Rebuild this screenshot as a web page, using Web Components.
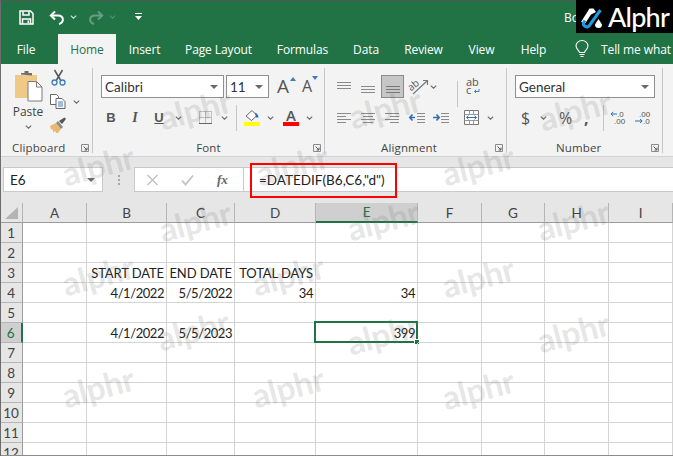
<!DOCTYPE html>
<html>
<head>
<meta charset="utf-8">
<title>Book1 - Excel</title>
<style>
  html, body { margin: 0; padding: 0; overflow: hidden; }
  body { width: 673px; height: 456px; font-family: "Open Sans", sans-serif; }
  excel-window { width: 673px; height: 456px; }
</style>
</head>
<body>
<excel-window>
  <excel-titlebar title-text="Book1 - Excel"></excel-titlebar>
  <excel-tabs></excel-tabs>
  <excel-ribbon></excel-ribbon>
  <excel-formula-bar cell="E6" formula='=DATEDIF(B6,C6,"d")'></excel-formula-bar>
  <excel-sheet></excel-sheet>
</excel-window>

<script>
// small helper, all icons are drawn on a pixel viewBox of their own size
const svg = (w, h, body, extra = '') =>
  `<svg width="${w}" height="${h}" viewBox="0 0 ${w} ${h}" fill="none" style="display:block;flex:none;overflow:visible;${extra}">${body}</svg>`;

const chevron = (c = '#6a6a6a') => svg(7, 4, `<path d="M.8.6 3.5 3.2 6.2.6" stroke="${c}" stroke-width="1.1"/>`);
const dropTri = svg(8, 4, '<path d="M0 0h8L4 4z" fill="#6a6a6a"/>');
const launcher = svg(8, 8, '<path d="M.5 7.500V.5h7v7z" stroke="#8a8a8a"/><path d="M2.500 2.500 6 6M6 3.500V6H3.500" stroke="#5a5a5a"/>');
const lines = (rows, c = '#8a8a8a') => rows.map(([x, y, w]) => `<path d="M${x} ${y + .5}h${w}" stroke="${c}"/>`).join('');

class ExcelWindow extends HTMLElement {
  constructor() {
    super();
    this.attachShadow({ mode: 'open' });
    const marks = [
      [195, 109], [385, 108], [575, 110],
      [98, 165], [292, 165], [478, 165],
      [195, 221], [383, 220], [573, 220],
      [98, 275], [288, 275], [478, 277],
      [193, 330], [383, 334], [573, 332],
      [98, 387], [288, 387], [478, 389]
    ];
    this.shadowRoot.innerHTML = `
      <style>
        :host { display: flex; flex-direction: column; position: relative; overflow: hidden; background: #fff; }
        .edge { position: absolute; inset: 0; border-top: 1px solid #4d5a53; border-left: 1px solid #6d6d6d; pointer-events: none; }
        .mark {
          position: absolute; transform: translate(-50%, -50%) rotate(-15deg);
          font: 700 33px "Lato", sans-serif; letter-spacing: -.3px; line-height: 1;
          color: rgba(105, 105, 105, .18); pointer-events: none;
        }
        .callout { position: absolute; left: 250px; top: 163px; width: 147px; height: 35px; box-sizing: border-box; border: 2px solid #f00; pointer-events: none; }
        .logo {
          position: absolute; right: 0; top: 0; width: 97px; height: 33px; background: #000;
          display: flex; align-items: center; gap: 4px; padding-left: 4px; box-sizing: border-box;
          color: #fff; font: 500 27px "Lato", sans-serif; letter-spacing: -.8px; overflow: hidden;
        }
      </style>
      <slot></slot>
      <div class="edge"></div>
      ${marks.map(([x, y]) => `<span class="mark" style="left:${x}px;top:${y}px">alphr</span>`).join('')}
      <div class="callout"></div>
      <div class="logo">
        ${svg(24, 24, `
          <path d="M1 17 9.500 3.500h4L16 7 11 9.500 5.500 18z" fill="#fff"/>
          <path d="M15.500 15 19 20.500a3.400 3.400 0 1 1-7 0z" fill="#fff" transform="translate(3 -1)"/>
          <path d="M20.500 5 9 21c-1.600 2-6.500 0-5.500-3L5 15.500" stroke="#1b9ce0" stroke-width="3"/>
        `)}
        <span>Alphr</span>
      </div>`;
  }
}

class ExcelTitlebar extends HTMLElement {
  connectedCallback() {
    const root = this.attachShadow({ mode: 'open' });
    root.innerHTML = `
      <style>
        :host { display: flex; align-items: center; height: 34px; background: #217346; color: #fff; font: 12px "Open Sans", sans-serif; flex: none; }
        .save { margin-left: 19px; }
        .undo { margin-left: 15px; }
        .c1 { margin-left: 5px; }
        .redo { margin-left: 11px; }
        .c2 { margin-left: 5px; }
        .more { margin-left: 18px; }
        .title { margin-left: 421px; white-space: nowrap; }
      </style>
      <span class="save">${svg(15, 15, '<path d="M1 1h10.500L14 3.500V14H1z" stroke="#fff" stroke-width="1.500"/><path d="M4 1.500v3.500h6V1.500M3.500 14V9h8v5" stroke="#fff" stroke-width="1.500"/><path d="M8.500 10.500h1.500V13H8.500z" fill="#fff"/>')}</span>
      <span class="undo">${svg(16, 15, '<path d="M6 1.500 1.800 5.500 6 9.500" stroke="#fff" stroke-width="2"/><path d="M2.500 5.500H9c6 0 6.500 7 1 8.500" stroke="#fff" stroke-width="2"/>')}</span>
      <span class="c1">${chevron('#cfe3d8')}</span>
      <span class="redo">${svg(16, 15, '<path d="M10 1.500l4.200 4L10 9.500" stroke="#64a083" stroke-width="2"/><path d="M13.500 5.500H7c-6 0-6.500 7-1 8.500" stroke="#64a083" stroke-width="2"/>')}</span>
      <span class="c2">${chevron('#4f9273')}</span>
      <span class="more">${svg(9, 8, '<path d="M1 .5h7" stroke="#fff"/><path d="M1 3h7L4.500 7z" fill="#fff"/>')}</span>
      <span class="title">${this.getAttribute('title-text')}</span>`;
  }
}

class ExcelTabs extends HTMLElement {
  constructor() {
    super();
    const tabs = [['File', 52, 6], ['Home', 58], ['Insert', 57], ['Page Layout', 91], ['Formulas', 77], ['Data', 50], ['Review', 65], ['View', 51], ['Help', 53]];
    this.attachShadow({ mode: 'open' }).innerHTML = `
      <style>
        :host { display: flex; height: 30px; background: #217346; color: #fff; font: 12px "Open Sans", sans-serif; flex: none; white-space: nowrap; overflow: hidden; }
        .tab { display: flex; align-items: center; justify-content: center; height: 30px; letter-spacing: -.1px; flex: none; }
        .active { background: #f3f3f3; color: #217346; }
        .bulb { margin-left: 15px; align-self: center; }
        .tell { margin-left: 12px; }
      </style>
      ${tabs.map(([name, w, m]) => `<div class="tab ${name === 'Home' ? 'active' : ''}" style="width:${w}px;margin-right:${m || 0}px">${name}</div>`).join('')}
      <span class="bulb">${svg(14, 19, '<path d="M4.500 12.500C4 10 1 9 1 5.800a6 5.300 0 0 1 12 0c0 3.200-3 4.200-3.500 6.700z" stroke="#fff" stroke-width="1.100"/><path d="M4.500 14.500h5M5.500 16.500h3" stroke="#fff" stroke-width="1.200"/>')}</span>
      <div class="tab tell">Tell me what you want to do</div>`;
  }
}

class RibbonGroup extends HTMLElement {
  constructor() {
    super();
    this.attachShadow({ mode: 'open' }).innerHTML = `
      <style>
        :host { display: block; position: relative; box-sizing: border-box; height: 85px; margin-top: 4px; flex: none; border-right: 1px solid #c6c6c6; }
        .body { height: 72px; }
        .label { display: block; text-align: center; font: 11.500px "Open Sans", sans-serif; letter-spacing: .15px; color: #444; }
        .launch { position: absolute; right: 3px; bottom: 1px; }
      </style>
      <div class="body"><slot></slot></div>
      <span class="label"></span>
      <span class="launch">${launcher}</span>`;
  }
  connectedCallback() {
    const label = this.shadowRoot.querySelector('.label');
    label.textContent = this.getAttribute('label');
    label.style.cssText += this.getAttribute('label-style') || '';
  }
}

class RibbonCombo extends HTMLElement {
  constructor() {
    super();
    this.attachShadow({ mode: 'open' }).innerHTML = `
      <style>
        :host { display: flex; align-items: center; justify-content: space-between; box-sizing: border-box; height: 23px; flex: none; background: #fff; border: 1px solid #8f8f8f; padding: 0 5px 0 3px; font: 13.500px "Lato", sans-serif; color: #333; }
      </style>
      <slot></slot>${dropTri}`;
  }
}

class ExcelRibbon extends HTMLElement {
  constructor() {
    super();
    this.attachShadow({ mode: 'open' }).innerHTML = `
      <style>
        :host { display: flex; height: 93px; flex: none; background: #f3f3f3; border-bottom: 1px solid #d2d2d2; box-sizing: border-box; color: #444; }
        .row { display: flex; align-items: center; }
        .clip { display: flex; padding: 2px 0 0 14px; }
        .paste { width: 28px; display: flex; flex-direction: column; align-items: center; }
        .paste span { font: 12px "Open Sans", sans-serif; margin-top: 1px; line-height: 17px; }
        .paste-chev { margin-top: 5px; }
        .clip-side { margin-left: 8px; display: flex; flex-direction: column; gap: 8px; margin-top: 0; }
        .font-body { padding: 7px 0 0 8px; }
        .al-body { padding: 7px 0 0 12px; }
        .num-body { padding: 7px 0 0 8px; }
        .r2 { margin-top: 11px; height: 17px; }
        .sep { width: 1px; height: 26px; background: #c6c6c6; flex: none; }
        .glyph { font: 700 13px "Liberation Sans", sans-serif; color: #555; text-align: center; flex: none; }
        .pressed { width: 23px; height: 23px; box-sizing: border-box; background: #c6c6c6; border: 1px solid #8a8a8a; display: flex; align-items: flex-end; justify-content: center; padding-bottom: 3px; flex: none; }
        .bigA { font: 400 19px "Open Sans", sans-serif; color: #555; line-height: 19px; position: relative; }
        .sym { font: 400 16px "Open Sans", sans-serif; color: #555; flex: none; }
      </style>

      <ribbon-group label="Clipboard" style="width:93px" label-style="text-align:left;padding-left:12px">
        <div class="clip">
          <div class="paste">
            ${svg(29, 32, `
              <path d="M1 4h22v23H1z" fill="#f0c987" transform="translate(0 1)"/>
              <path d="M7 4.500V3h3.500V1h4v2H18v2.500z" fill="#6d6d6d"/>
              <path d="M14 11.500h8.500l5.500 5.500v14H14z" fill="#fff" stroke="#7a7a7a"/>
              <path d="M22.500 11.500V17H28" stroke="#7a7a7a"/>`)}
            <span>Paste</span>
            <div class="paste-chev">${chevron()}</div>
          </div>
          <div class="clip-side">
            ${svg(15, 16, `
              <path d="M3.500 0 9.500 10M11.500 0 5.500 10" stroke="#555" stroke-width="1.500"/>
              <circle cx="3.500" cy="12.500" r="2.500" stroke="#3d7cb8" stroke-width="1.300"/>
              <circle cx="11.500" cy="12.500" r="2.500" stroke="#3d7cb8" stroke-width="1.300"/>`, 'margin-left:1px')}
            <div class="row">
              ${svg(16, 15, `
                <path d="M.5.500h6l2 2v8h-8z" stroke="#666" fill="#fff"/>
                <path d="M6 4.500h6l3 3v7H6z" stroke="#666" fill="#fff"/>
                <path d="M8 8h5M8 10h5M8 12h5" stroke="#3d7cb8"/>`)}
              <span style="margin-left:7px">${chevron()}</span>
            </div>
            ${svg(17, 16, `
              <path d="M0 9 6 6l5 6-3 4H6L5 13.500 4 15H3L2.500 12 1 12.500z" fill="#e9b871"/>
              <path d="M6 6l5 6 2-2-5-6z" fill="#8a8a8a"/>
              <path d="M9 4l3 3 4-5-1.500-1.500z" fill="#555"/>`)}
          </div>
        </div>
      </ribbon-group>

      <ribbon-group label="Font" style="width:232px">
        <div class="font-body">
          <div class="row">
            <ribbon-combo style="width:123px">Calibri</ribbon-combo>
            <ribbon-combo style="width:43px;margin-left:2px">11</ribbon-combo>
            <span class="bigA" style="margin-left:8px;width:15px">A${svg(6, 4, '<path d="M0 4h6L3 0z" fill="#3d7cb8"/>', 'position:absolute;right:-4px;top:0')}</span>
            <span class="bigA" style="margin-left:10px;width:13px;font-size:16px">A${svg(6, 4, '<path d="M0 0h6L3 4z" fill="#3d7cb8"/>', 'position:absolute;right:-3px;top:-1px')}</span>
          </div>
          <div class="row r2">
            <span class="glyph" style="width:10px;margin-left:5px">B</span>
            <span class="glyph" style="width:10px;margin-left:14px;font-style:italic;font-family:'Liberation Serif',serif;font-size:14px">I</span>
            <span class="glyph" style="width:12px;margin-left:13px;text-decoration:underline">U</span>
            <span style="margin-left:9.500px">${chevron()}</span>
            <span style="margin-left:17px">${svg(13, 13, '<path d="M.5.500h12v12H.5zM6.500.500v12M.5 6.500h12" stroke="#888" stroke-dasharray="1 1"/><path d="M0 12.500h13" stroke="#666"/>')}</span>
            <span style="margin-left:9px">${chevron()}</span>
            <span class="sep" style="margin-left:8.500px"></span>
            <span style="margin-left:7px">${svg(16, 17, `
              <path d="M2 7 8 1.500l5 5-5.500 5z" fill="#fff" stroke="#666"/>
              <path d="M11 3.500c2.500 1 3.500 3.500 3.500 5h-2.500z" fill="#2f6fb0"/>
              <path d="M0 13h16v4H0z" fill="#ff0"/>`)}</span>
            <span style="margin-left:6.500px">${chevron()}</span>
            <span style="margin-left:9.500px;display:flex;flex-direction:column;width:16px;align-items:center">
              <span class="bigA" style="font-size:15px;line-height:13px;font-weight:600">A</span>
              <span style="display:block;width:16px;height:4px;background:#f00"></span>
            </span>
            <span style="margin-left:6.500px">${chevron()}</span>
          </div>
        </div>
      </ribbon-group>

      <ribbon-group label="Alignment" style="width:182px" label-style="text-align:left;padding-left:56px">
        <div class="al-body">
          <div class="row" style="height:23px">
            ${svg(14, 16, lines([[0, 3, 14], [0, 6, 14], [0, 9, 14]]))}
            <span style="margin-left:10px">${svg(14, 16, lines([[0, 7, 14], [0, 10, 14], [0, 13, 14]]))}</span>
            <span class="pressed" style="margin-left:6px">${svg(14, 9, lines([[0, 1, 14], [0, 4, 14], [0, 7, 14]], '#777'))}</span>
            <span style="margin-left:5px">${svg(20, 17, `
              <text x="0" y="10" transform="rotate(-40 6 9)" font-family="Open Sans" font-size="10" fill="#555">ab</text>
              <path d="M4 16 18 3M14 2.500h4.500V7" stroke="#777" stroke-width="1.200"/>`)}</span>
            <span style="margin-left:1px">${chevron()}</span>
            <span class="sep" style="margin-left:19.500px;position:relative;top:7px"></span>
            <span style="margin-left:8.500px">${svg(14, 17, `
              <text x="0" y="8" font-family="Open Sans" font-size="11" fill="#555">ab</text>
              <text x="0" y="16" font-family="Open Sans" font-size="11" fill="#555">c</text>
              <path d="M13 11v2.500H8.500M10 12l-1.500 1.500L10 15" stroke="#3d7cb8"/>`)}</span>
          </div>
          <div class="row r2">
            ${svg(14, 11, lines([[0, 1, 14], [0, 4, 9], [0, 7, 14], [0, 10, 9]]))}
            <span style="margin-left:10px">${svg(14, 11, lines([[0, 1, 14], [2, 4, 10], [0, 7, 14], [2, 10, 10]]))}</span>
            <span style="margin-left:10px">${svg(14, 11, lines([[0, 1, 14], [5, 4, 9], [0, 7, 14], [5, 10, 9]]))}</span>
            <span style="margin-left:10px">${svg(16, 11, lines([[8, 1, 8], [8, 4, 8], [8, 7, 8], [8, 10, 8]]) + '<path d="M0 5.500h6M3.500 2.500 .8 5.500 3.500 8.500" stroke="#2f6fb0" stroke-width="1.600"/>')}</span>
            <span style="margin-left:8px">${svg(16, 11, lines([[8, 1, 8], [8, 4, 8], [8, 7, 8], [8, 10, 8]]) + '<path d="M0 5.500h6M3.500 2.500 6.200 5.500 3.500 8.500" stroke="#2f6fb0" stroke-width="1.600"/>')}</span>
            <span style="margin-left:15px">${svg(15, 15, `
              <path d="M.5.500h14v14H.5z" stroke="#777" fill="#fff"/>
              <path d="M.5 4.500h14M.5 10.500h14M5.500.5v4M9.500.5v4M5.500 10.500v4M9.500 10.500v4" stroke="#999"/>
              <path d="M2.500 7.500h10M4.500 5.700 2.500 7.500l2 1.800M10.500 5.700l2 1.800-2 1.800" stroke="#2f6fb0"/>`)}</span>
            <span style="margin-left:8px">${chevron()}</span>
          </div>
        </div>
      </ribbon-group>

      <ribbon-group label="Number" style="width:156px" label-style="text-align:left;padding-left:49px">
        <div class="num-body">
          <ribbon-combo style="width:140px">General</ribbon-combo>
          <div class="row r2">
            <span class="sym" style="width:10px;margin-left:6px">$</span>
            <span style="margin-left:9px">${chevron()}</span>
            <span class="sym" style="margin-left:12px;width:14px">%</span>
            <span class="sym" style="margin-left:11px;width:6px;font-weight:700">,</span>
            <span class="sep" style="margin-left:13px"></span>
            <span style="margin-left:6px">${svg(19, 15, `
              <text x="7" y="7" font-family="Liberation Sans" font-size="8" fill="#555">.0</text>
              <text x="4" y="14" font-family="Liberation Sans" font-size="8" fill="#555">.00</text>
              <path d="M1 4h6M3.200 2 1 4l2.200 2" stroke="#2f6fb0"/>`)}</span>
            <span style="margin-left:6px">${svg(17, 15, `
              <text x="4" y="7" font-family="Liberation Sans" font-size="8" fill="#555">.00</text>
              <text x="8" y="14" font-family="Liberation Sans" font-size="8" fill="#555">.0</text>
              <path d="M0 11h7M5 9l2.200 2L5 13" stroke="#2f6fb0"/>`)}</span>
          </div>
        </div>
      </ribbon-group>`;
  }
}

class ExcelFormulaBar extends HTMLElement {
  connectedCallback() {
    const root = this.attachShadow({ mode: 'open' });
    root.innerHTML = `
      <style>
        :host { display: flex; height: 46px; flex: none; box-sizing: border-box; padding: 10px 0 11px 3px; background: #e6e6e6; font: 13.500px "Lato", sans-serif; color: #222; }
        .box { background: #fff; box-sizing: border-box; border: 1px solid #c9c9c9; height: 25px; display: flex; align-items: center; flex: none; }
        .name { width: 100px; padding: 0 7px 0 6px; justify-content: space-between; }
        .dots { width: 31px; display: flex; flex-direction: column; align-items: center; justify-content: center; gap: 2px; flex: none; }
        .dots i { width: 2px; height: 2px; background: #a5a5a5; display: block; }
        .btns { width: 110px; padding-left: 11px; gap: 22px; }
        .fx { font: italic 700 13px "Liberation Serif", serif; color: #666; margin-left: 1px; }
        .input { flex: 1; padding-left: 15px; border-right: 0; margin-left: -1px; white-space: nowrap; }
      </style>
      <div class="box name"><span>${this.getAttribute('cell')}</span>${dropTri}</div>
      <div class="dots"><i></i><i></i><i></i></div>
      <div class="box btns">
        ${svg(13, 12, '<path d="M1.500 1 11.500 11M11.500 1 1.500 11" stroke="#c4c4c4" stroke-width="1.600"/>')}
        ${svg(13, 12, '<path d="M1 6.500 4.500 10.500 12 1.500" stroke="#c4c4c4" stroke-width="1.800"/>')}
        <span class="fx">fx</span>
      </div>
      <div class="box input"></div>`;
    root.querySelector('.input').textContent = this.getAttribute('formula');
  }
}

class ExcelSheet extends HTMLElement {
  constructor() {
    super();
    const cols = ['A', 'B', 'C', 'D', 'E', 'F', 'G', 'H', 'I'];
    const data = {
      B3: 'START DATE', C3: 'END DATE', D3: 'TOTAL DAYS',
      B4: '4/1/2022', C4: '5/5/2022', D4: '34', E4: '34',
      B6: '4/1/2022', C6: '5/5/2023', E6: '399'
    };
    let html = `<div class="corner">${svg(13, 12, '<path d="M13 0v12H0z" fill="#b4b4b4"/>')}</div>`;
    cols.forEach(c => { html += `<div class="colh ${c === 'E' ? 'on' : ''}">${c}</div>`; });
    for (let r = 1; r <= 12; r++) {
      html += `<div class="rowh ${r === 6 ? 'on' : ''}">${r}</div>`;
      cols.forEach(c => {
        const id = c + r;
        const sel = id === 'E6' ? '<i class="sel"></i><i class="handle"></i>' : '';
        const num = /^[\d/]+$/.test(data[id] || '') ? 'num' : '';
        html += `<div class="cell">${data[id] ? `<span class="${num}">${data[id]}</span>` : ''}${sel}</div>`;
      });
    }
    this.attachShadow({ mode: 'open' }).innerHTML = `
      <style>
        :host { display: block; height: 253px; flex: none; overflow: hidden; position: relative; font: 13px "Lato", sans-serif; letter-spacing: -.1px; color: #222; }
        .grid { display: grid; grid-template-columns: 23px 64px 80px 68px 81px 102px 64px 63px 64px 64px; grid-template-rows: 20px repeat(12, 20px); }
        .corner, .colh, .rowh { background: #e6e6e6; box-sizing: border-box; display: flex; align-items: center; justify-content: center; color: #444; font-size: 13.500px; }
        .corner { border-right: 1px solid #b5b5b5; border-bottom: 1px solid #9b9b9b; justify-content: flex-end; align-items: flex-end; padding: 0 4px 3px 0; }
        .colh { border-right: 1px solid #b5b5b5; border-bottom: 1px solid #9b9b9b; }
        .colh.on { background: #cfcfcf; color: #217346; border-bottom: 2px solid #217346; }
        .rowh { border-right: 1px solid #9b9b9b; border-bottom: 1px solid #b5b5b5; }
        .rowh.on { background: #cfcfcf; color: #217346; border-right: 2px solid #217346; }
        .cell { box-sizing: border-box; border-right: 1px solid #d4d4d4; border-bottom: 1px solid #d4d4d4; position: relative; display: flex; align-items: center; justify-content: flex-end; padding-right: 2px; white-space: nowrap; }
        .num { letter-spacing: -.45px; }
        .sel { position: absolute; left: -2px; top: -2px; right: -1px; bottom: -1px; border: 2px solid #217346; }
        .handle { position: absolute; right: -3px; bottom: -3px; width: 6px; height: 6px; background: #217346; border: 1px solid #fff; box-sizing: border-box; }
        .base { position: absolute; left: 0; right: 0; bottom: 0; height: 1px; background: #8c8c8c; }
      </style>
      <div class="grid">${html}</div>
      <div class="base"></div>`;
  }
}

customElements.define('excel-window', ExcelWindow);
customElements.define('excel-titlebar', ExcelTitlebar);
customElements.define('excel-tabs', ExcelTabs);
customElements.define('ribbon-group', RibbonGroup);
customElements.define('ribbon-combo', RibbonCombo);
customElements.define('excel-ribbon', ExcelRibbon);
customElements.define('excel-formula-bar', ExcelFormulaBar);
customElements.define('excel-sheet', ExcelSheet);
</script>
</body>
</html>
